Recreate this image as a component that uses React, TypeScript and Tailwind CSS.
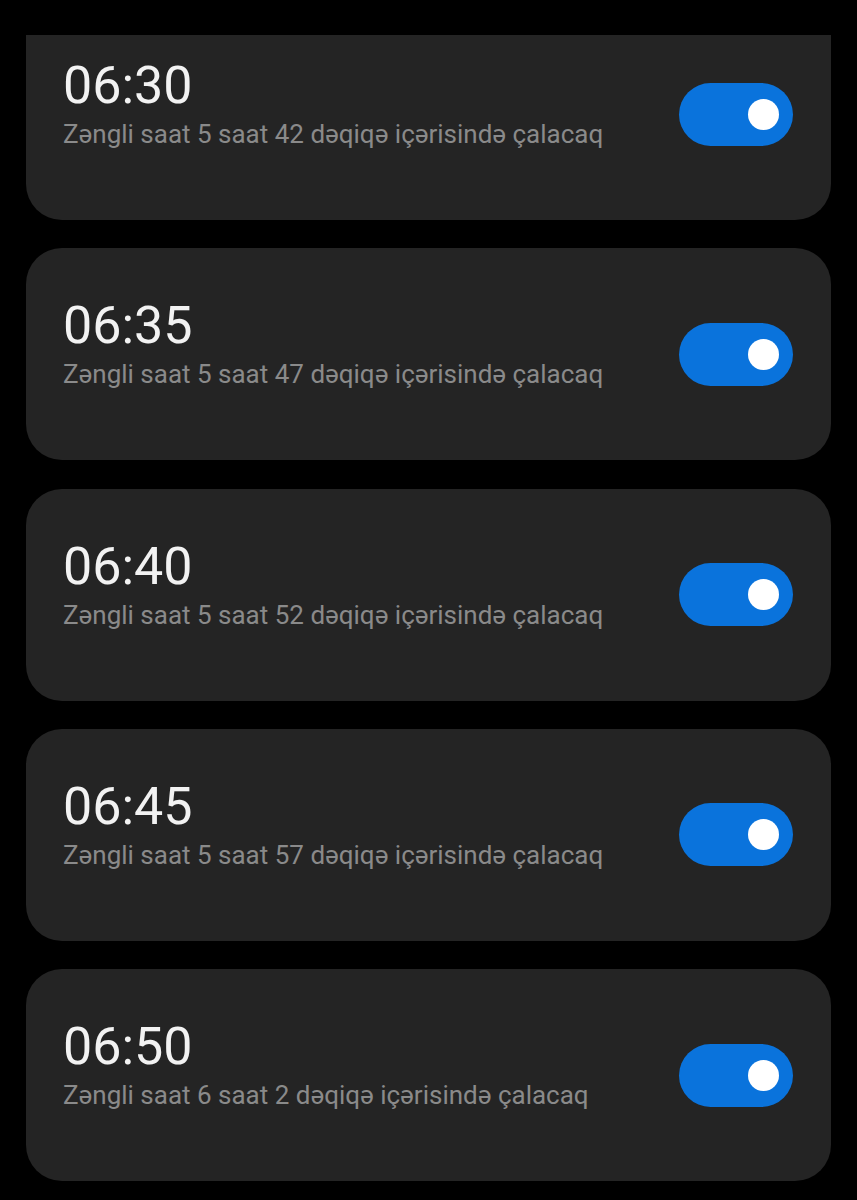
import React from "react";

const alarms = [
  { time: "06:30", sub: "Zəngli saat 5 saat 42 dəqiqə içərisində çalacaq" },
  { time: "06:35", sub: "Zəngli saat 5 saat 47 dəqiqə içərisində çalacaq" },
  { time: "06:40", sub: "Zəngli saat 5 saat 52 dəqiqə içərisində çalacaq" },
  { time: "06:45", sub: "Zəngli saat 5 saat 57 dəqiqə içərisində çalacaq" },
  { time: "06:50", sub: "Zəngli saat 6 saat 2 dəqiqə içərisində çalacaq" },
];

function Toggle() {
  return (
    <div className="w-[114px] h-[63px] rounded-full bg-[#0a73dc] flex items-center justify-end pr-[14px] shrink-0">
      <div className="w-[31px] h-[31px] rounded-full bg-white" />
    </div>
  );
}

function Row({ time, sub }: { time: string; sub: string }) {
  return (
    <div className="h-[212px] flex items-center justify-between pl-[37px] pr-[38px]">
      <div className="flex flex-col pb-[19px]">
        <div className="text-[52px] leading-[52px] text-[#f2f2f2]">{time}</div>
        <div className="text-[26px] leading-[30px] text-[#8a8a8a] mt-[7px]">{sub}</div>
      </div>
      <Toggle />
    </div>
  );
}

export default function App() {
  return (
    <div
      className="w-[857px] h-[1200px] bg-black pt-[35px] px-[26px] flex flex-col gap-[28.3px] overflow-hidden"
      style={{ fontFamily: "Roboto, 'Noto Sans', sans-serif" }}
    >
      {alarms.map((a, i) =>
        i === 0 ? (
          <div key={i} className="h-[185px] bg-[#242424] rounded-b-[36px] overflow-hidden shrink-0">
            <div className="-mt-[27px]">
              <Row time={a.time} sub={a.sub} />
            </div>
          </div>
        ) : (
          <div key={i} className="bg-[#242424] rounded-[36px] shrink-0">
            <Row time={a.time} sub={a.sub} />
          </div>
        )
      )}
    </div>
  );
}
